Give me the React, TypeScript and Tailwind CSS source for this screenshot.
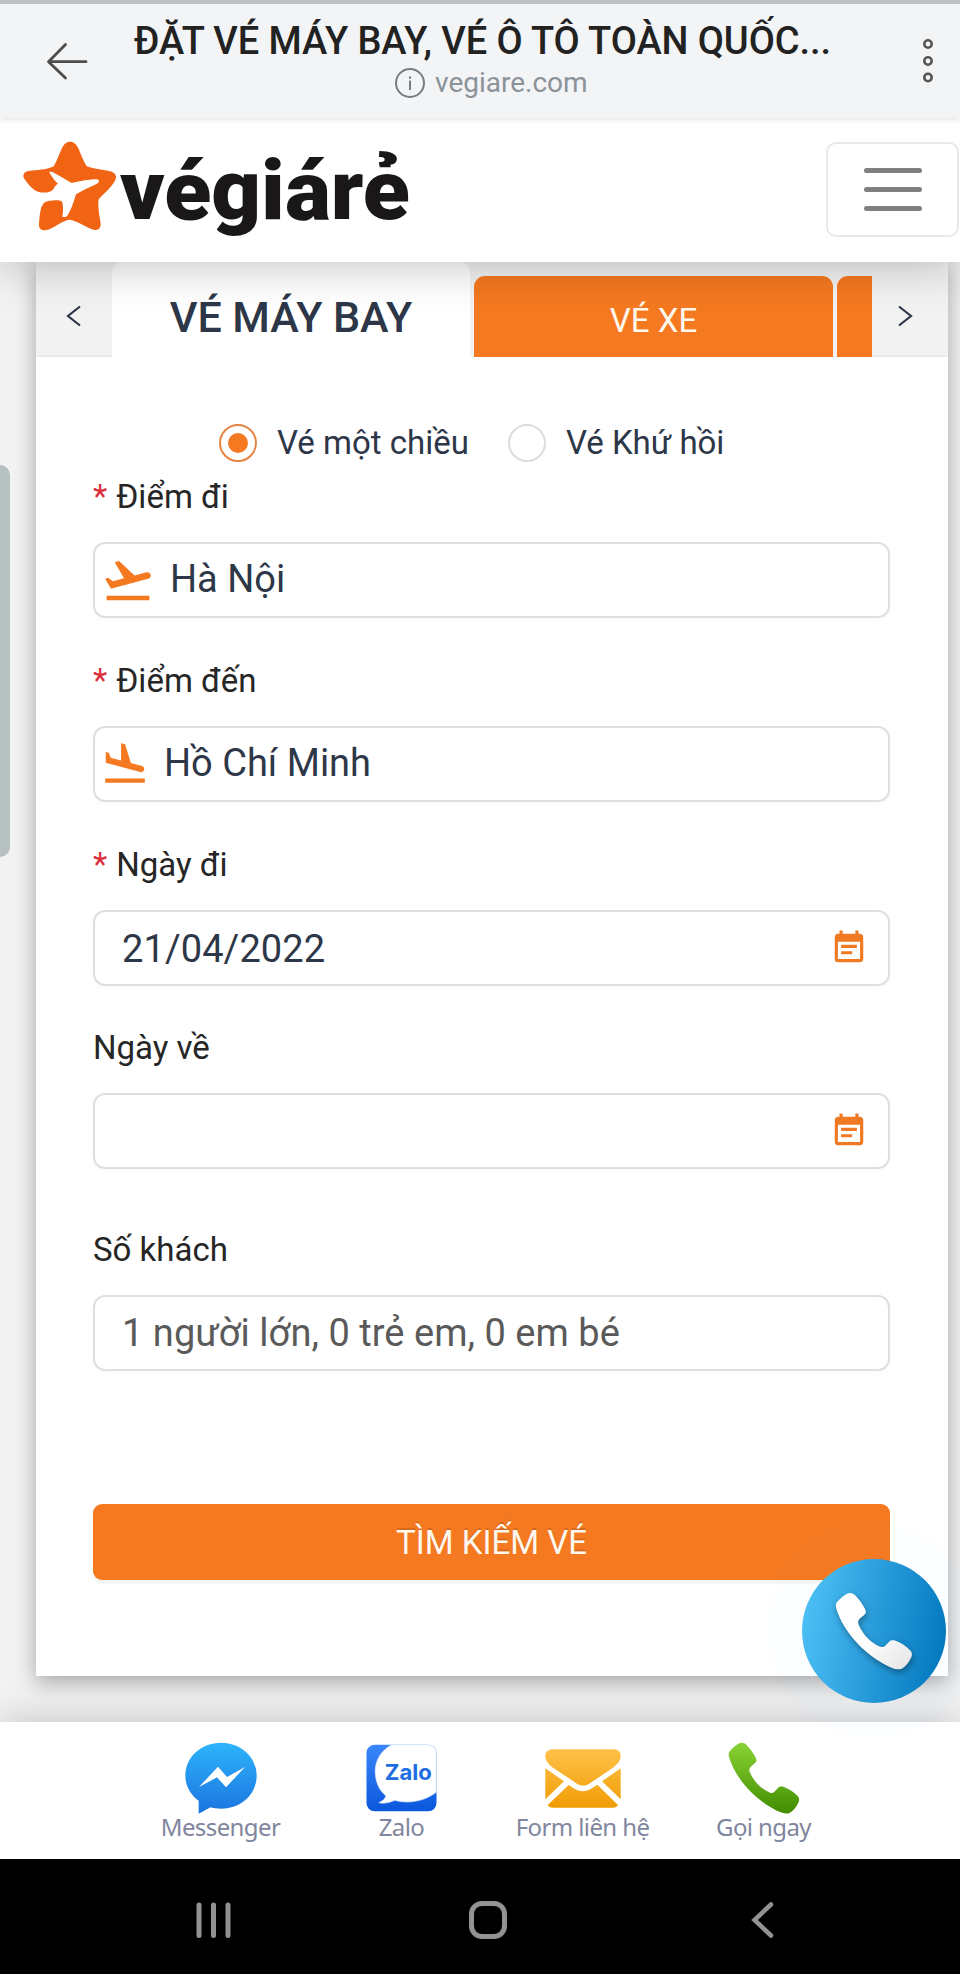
import React, { useState } from 'react';
import { MdEventNote, MdFlightLand, MdFlightTakeoff } from 'react-icons/md';

const PHONE_PATH =
  'M718 130C724 128 732 130 737 135C748 146 758 160 765 174C769 182 768 186 762 191L750 201C745 206 745 212 748 219C760 245 780 268 808 279C815 281 819 279 824 273L832 265C837 260 842 260 850 262C865 268 880 277 891 289C897 296 897 304 891 313C885 324 878 334 868 339C860 343 850 342 840 338C770 308 705 240 685 172C683 163 684 158 690 152C698 143 708 134 718 130Z';

function BrowserBar() {
  return (
    <div className="relative z-30 flex h-[118px] items-start border-t-4 border-[#c0c1c3] bg-[#f3f4f6] shadow-[0_1px_6px_rgba(0,0,0,0.14)]">
      <svg className="ml-[45px] mt-[37px] h-[42px] w-[44px]" viewBox="0 0 44 42" fill="none" stroke="#4d4d4d" strokeWidth="2.8" strokeLinecap="round" strokeLinejoin="round">
        <path d="M41 20.7H4M20.500 3.500L3.500 20.700L20.500 37" />
      </svg>
      <div className="ml-[45px] w-[695px]">
        <div className="mt-4 h-[42px] whitespace-nowrap text-[38px] font-medium leading-[42px] tracking-[-0.08px] text-[#222]">
          ĐẶT VÉ MÁY BAY, VÉ Ô TÔ TOÀN QUỐC...
        </div>
        <div className="ml-[260px] mt-1 flex h-[34px] items-center gap-[9px] text-[28px] leading-[34px] text-[#8b9299]">
          <svg className="h-[32px] w-[32px]" viewBox="0 0 32 32" fill="none" stroke="#757c84" strokeWidth="2">
            <circle cx="16" cy="16" r="14" />
            <path d="M16 13.500V23M16 9.500v2.200" />
          </svg>
          <span>vegiare.com</span>
        </div>
      </div>
      <svg className="ml-[92px] mt-[32px] h-[50px] w-[14px]" viewBox="0 0 14 50" fill="none" stroke="#555" strokeWidth="2.600">
        <circle cx="7" cy="8" r="3.700" />
        <circle cx="7" cy="25" r="3.700" />
        <circle cx="7" cy="41.500" r="3.700" />
      </svg>
    </div>
  );
}

function Logo() {
  return (
    <svg className="h-[124px] w-[410px] overflow-visible" viewBox="0 0 410 124">
      <g transform="translate(0 18) scale(0.33333) translate(-60 -414)">
        <path
          fill="#f06414"
          d="M210 425C222 425 230 433 236 447C244 468 252 485 260 499C285 508 312 510 330 514C345 518 352 527 346 540C335 562 312 580 296 598C292 625 300 650 302 672C302 686 294 692 281 689C258 682 235 664 209 659C186 662 165 682 141 690C125 693 116 687 117 672C119 650 120 628 128 613L120 578C98 572 82 550 72 535C67 523 73 515 87 513C110 509 138 511 161 499C171 482 178 462 186 444C192 432 199 425 210 425Z"
        />
        <path
          fill="#fff"
          d="M147 515L158 516L215 549C240 543 270 538 290 538C300 540 298 548 290 552C268 562 245 572 228 583C220 610 212 632 202 647C198 652 188 652 187 650C190 635 190 615 186 605C180 599 150 599 132 608L126 618L100 600L106 574C125 580 152 580 161 566C166 556 170 556 173 550C162 540 152 525 147 515Z"
        />
      </g>
      <text
        x="100"
        y="99"
        fill="#1a1718"
        fontFamily="Roboto, sans-serif"
        fontWeight="900"
        fontSize="83"
        textLength="290"
        lengthAdjust="spacingAndGlyphs"
      >
        végiárẻ
      </text>
    </svg>
  );
}

function SiteHeader() {
  return (
    <header className="relative z-20 flex h-[144px] items-start bg-white shadow-[0_0_46px_rgba(0,0,0,0.28)]">
      <div className="ml-5 mt-[2px]">
        <Logo />
      </div>
      <button className="ml-auto mr-px mt-6 flex h-[95px] w-[133px] flex-col items-center justify-center gap-[14px] rounded-[10px] border-2 border-[#e8e8e8]">
        <span className="h-[5px] w-[58px] rounded-full bg-[#808080]" />
        <span className="h-[5px] w-[58px] rounded-full bg-[#808080]" />
        <span className="h-[5px] w-[58px] rounded-full bg-[#808080]" />
      </button>
    </header>
  );
}

function TabArrow({ direction }: { direction: 'left' | 'right' }) {
  return (
    <div className="flex h-[95px] w-[76px] shrink-0 border-b-2 border-[#eaeaea] pt-[43px]">
      <svg
        className={direction === 'left' ? 'ml-[30px] h-[22px] w-4' : 'ml-[25px] h-[22px] w-4'}
        viewBox="0 0 16 22"
        fill="none"
        stroke="#2d3748"
        strokeWidth="2.200"
      >
        <path d={direction === 'left' ? 'M14 1.500L2 11L14 20.500' : 'M2 1.500L14 11L2 20.500'} />
      </svg>
    </div>
  );
}

function Tabs() {
  return (
    <div className="flex h-[95px] bg-[#f2f2f2]">
      <TabArrow direction="left" />
      <div className="flex min-w-0 flex-1 items-end gap-1 overflow-hidden">
        <div className="flex h-[95px] w-[358px] shrink-0 items-center justify-center rounded-t-[10px] bg-white pt-4 text-[43px] font-medium leading-none tracking-[-0.1px] text-[#2d3748]">
          VÉ MÁY BAY
        </div>
        <div className="flex h-[81px] w-[359px] shrink-0 items-center justify-center rounded-t-[11px] bg-[#f57920] pt-2 text-[33px] leading-none text-[#fff8ee]">
          VÉ XE
        </div>
        <div className="h-[81px] w-[359px] shrink-0 rounded-t-[11px] bg-[#f57920]" />
      </div>
      <TabArrow direction="right" />
    </div>
  );
}

function Radio({ label, checked, onSelect }: { label: string; checked: boolean; onSelect: () => void }) {
  return (
    <button className="flex items-center text-[33px] leading-10 text-[#2d3748]" onClick={onSelect}>
      <span
        className={
          checked
            ? 'mr-5 flex h-[38px] w-[38px] items-center justify-center rounded-full border-2 border-[#e58440]'
            : 'mr-5 flex h-[38px] w-[38px] items-center justify-center rounded-full border-2 border-[#dcdcdc]'
        }
      >
        {checked && <span className="h-5 w-5 rounded-full bg-[#f57920]" />}
      </span>
      {label}
    </button>
  );
}

interface FieldProps {
  label: string;
  required?: boolean;
  className?: string;
  children?: React.ReactNode;
}

function Field({ label, required, className = '', children }: FieldProps) {
  return (
    <div className={className}>
      <div className="flex h-10 items-center whitespace-nowrap pb-[2px] text-[33px] leading-10 text-[#262626]">
        {required && <span className="mr-[9px] text-[#dc2f3c]">*</span>}
        {label}
      </div>
      <div className="mt-6 flex h-[76px] items-center whitespace-nowrap rounded-xl border-2 border-[#dfdfdf] bg-white text-[38px] leading-none text-[#2d3748] shadow-[0_3px_4px_rgba(0,0,0,0.02)]">
        {children}
      </div>
    </div>
  );
}

function SearchForm() {
  const [trip, setTrip] = useState('one-way');

  return (
    <div className="flex flex-col pb-24 pl-[57px] pr-[58px] pt-[66px]">
      <div className="ml-[126px] flex h-10 items-center gap-[39px]">
        <Radio label="Vé một chiều" checked={trip === 'one-way'} onSelect={() => setTrip('one-way')} />
        <Radio label="Vé Khứ hồi" checked={trip === 'return'} onSelect={() => setTrip('return')} />
      </div>

      <Field label="Điểm đi" required className="mt-[15px]">
        <MdFlightTakeoff className="ml-[6px] h-[54px] w-[54px] text-[#f57920]" />
        <span className="ml-[15px] pb-[2px]">Hà Nội</span>
      </Field>
      <Field label="Điểm đến" required className="mt-11">
        <MdFlightLand className="ml-[5px] h-[50px] w-[50px] text-[#f57920]" />
        <span className="ml-[14px] pb-[3px]">Hồ Chí Minh</span>
      </Field>
      <Field label="Ngày đi" required className="mt-11">
        <span className="ml-[27px] pt-[2px] tracking-[0.1px]">21/04/2022</span>
        <MdEventNote className="ml-auto mr-[20px] h-[38px] w-[38px] text-[#f07a24]" />
      </Field>
      <Field label="Ngày về" className="mt-[43px]">
        <MdEventNote className="ml-auto mr-[20px] h-[38px] w-[38px] text-[#f07a24]" />
      </Field>
      <Field label="Số khách" className="mt-[62px]">
        <span className="ml-[27px] tracking-[0.04px] text-[#5a5a5a]">1 người lớn, 0 trẻ em, 0 em bé</span>
      </Field>

      <button className="mt-[133px] flex h-[76px] items-center justify-center rounded-[9px] bg-[#f57920] text-[33px] leading-none text-[#fff8ee] shadow-[0_4px_2px_rgba(0,0,0,0.045)] [text-shadow:0_-2px_0_rgba(0,0,0,0.12)]">
        TÌM KIẾM VÉ
      </button>
    </div>
  );
}

function CallButton() {
  return (
    <button className="absolute left-[802px] top-[1559px] z-40 flex h-[144px] w-[144px] items-center justify-center rounded-full bg-[linear-gradient(100deg,#4fc3f7_2%,#2a9ddb_48%,#0277bd_96%)] shadow-[0_0_0_36px_rgba(79,170,247,0.012)]">
      <svg className="h-[90px] w-[90px] drop-shadow-[1px_3px_3px_rgba(0,0,0,0.35)]" viewBox="665 110 250 250">
        <defs>
          <linearGradient id="handset" x1="0" y1="0" x2="1" y2="1">
            <stop offset="0.5" stopColor="#fff" />
            <stop offset="1" stopColor="#e4e4e6" />
          </linearGradient>
        </defs>
        <path d={PHONE_PATH} fill="url(#handset)" />
      </svg>
    </button>
  );
}

function MessengerIcon() {
  return (
    <svg className="h-[72px] w-[72px]" viewBox="193 127 216 216">
      <defs>
        <linearGradient id="messenger" x1="0" y1="0" x2="0" y2="1">
          <stop offset="0" stopColor="#2db4fb" />
          <stop offset="1" stopColor="#1c74e0" />
        </linearGradient>
      </defs>
      <path
        fill="url(#messenger)"
        d="M301 129C242 129 194 172 194 228C194 257 208 284 234 303V342L270 323C280 326 290 327 301 327C360 327 408 284 408 228C408 172 360 129 301 129Z"
      />
      <path fill="#fff" d="M235 262L292 201L319 232L373 202L316 263L289 233Z" />
    </svg>
  );
}

function ZaloIcon() {
  return (
    <svg className="h-[68px] w-[71px]" viewBox="735.500 135 213 204">
      <defs>
        <linearGradient id="zalo" x1="0" y1="0" x2="0" y2="1">
          <stop offset="0" stopColor="#3a86fb" />
          <stop offset="1" stopColor="#0a57dc" />
        </linearGradient>
      </defs>
      <rect x="737" y="137" width="210" height="200" rx="25" fill="url(#zalo)" />
      <path
        fill="#fff"
        stroke="#e6edfb"
        strokeWidth="2"
        d="M812 138C780 155 763 185 763 218C764 250 776 275 795 290C794 298 785 306 774 311C790 315 808 310 822 304C860 315 910 308 946 280V160A23 22 0 0 0 923 138Z"
      />
      <text
        x="792"
        y="244"
        fill="#206de2"
        fontFamily="Inter, sans-serif"
        fontWeight="700"
        fontSize="66"
        textLength="141"
        lengthAdjust="spacingAndGlyphs"
      >
        Zalo
      </text>
    </svg>
  );
}

function MailIcon() {
  return (
    <svg className="h-[59px] w-[76px]" viewBox="134 143 228 177">
      <defs>
        <linearGradient id="mail" gradientUnits="userSpaceOnUse" x1="248" y1="143" x2="248" y2="320">
          <stop offset="0" stopColor="#ffc14a" />
          <stop offset="1" stopColor="#f09d04" />
        </linearGradient>
      </defs>
      <g fill="url(#mail)">
        <path d="M135 165C135 150 145 144 158 144H340C352 144 361 150 361 165C360 180 350 190 338 199L270 245C255 255 242 255 230 247L158 199C145 190 135 178 135 165Z" />
        <path d="M135 201L191 240L135 294Z" />
        <path d="M361 201L305 240L361 294Z" />
        <path d="M205 251L225 264C240 272 255 272 270 264L291 250L353 311C350 317 345 319 338 319H158C150 319 145 317 142 311Z" />
      </g>
    </svg>
  );
}

function GreenPhoneIcon() {
  return (
    <svg className="h-[72px] w-[72px]" viewBox="682 127 216 216">
      <defs>
        <linearGradient id="phone" x1="0" y1="0" x2="0" y2="1">
          <stop offset="0" stopColor="#8ad335" />
          <stop offset="1" stopColor="#418d00" />
        </linearGradient>
      </defs>
      <path d={PHONE_PATH} fill="url(#phone)" />
    </svg>
  );
}

const contacts = [
  { label: 'Messenger', icon: <MessengerIcon /> },
  { label: 'Zalo', icon: <ZaloIcon /> },
  { label: 'Form liên hệ', icon: <MailIcon /> },
  { label: 'Gọi ngay', icon: <GreenPhoneIcon /> },
];

function ContactBar() {
  return (
    <nav className="relative z-20 flex h-[137px] bg-white pl-[130px] shadow-[0_0_36px_rgba(60,64,80,0.28)]">
      {contacts.map(contact => (
        <div key={contact.label} className="flex w-[181px] flex-col items-center pt-5">
          <div className="flex h-[72px] items-center justify-center">{contact.icon}</div>
          <span className="-mt-px h-7 whitespace-nowrap font-['Noto_Sans',sans-serif] text-[24px] leading-7 tracking-[-0.6px] text-[#80869d]">
            {contact.label}
          </span>
        </div>
      ))}
    </nav>
  );
}

function SystemNav() {
  return (
    <div className="relative z-20 flex h-[115px] bg-black">
      <svg className="ml-[195px] mt-[42px] h-10 w-[38px]" viewBox="0 0 38 40" stroke="#929292" strokeWidth="5" strokeLinecap="round">
        <path d="M4 4V34.500M18.500 4V34.500M33 4V34.500" />
      </svg>
      <div className="ml-[236px] mt-[42px] h-[38px] w-[38px] rounded-[13px] border-[5px] border-[#929292]" />
      <svg className="ml-[243px] mt-[42px] h-10 w-[26px]" viewBox="0 0 26 40" fill="none" stroke="#929292" strokeWidth="4.500" strokeLinecap="round">
        <path d="M21 3.500L4.500 19L21 34.500" />
      </svg>
    </div>
  );
}

export default function App() {
  return (
    <div className="relative flex h-[1974px] w-[960px] flex-col overflow-hidden bg-[#f2f2f2] font-[Roboto,sans-serif]">
      <BrowserBar />
      <SiteHeader />
      <main className="h-[1460px] pl-9">
        <section className="h-[1414px] w-[912px] bg-white shadow-[0_6px_20px_rgba(0,0,0,0.32)]">
          <Tabs />
          <SearchForm />
        </section>
      </main>
      <ContactBar />
      <SystemNav />

      {/* Edge panel handle */}
      <div className="absolute left-0 top-[465px] z-40 h-[392px] w-[10px] rounded-r-[10px] bg-[#b7c0c1]" />
      <CallButton />
    </div>
  );
}
